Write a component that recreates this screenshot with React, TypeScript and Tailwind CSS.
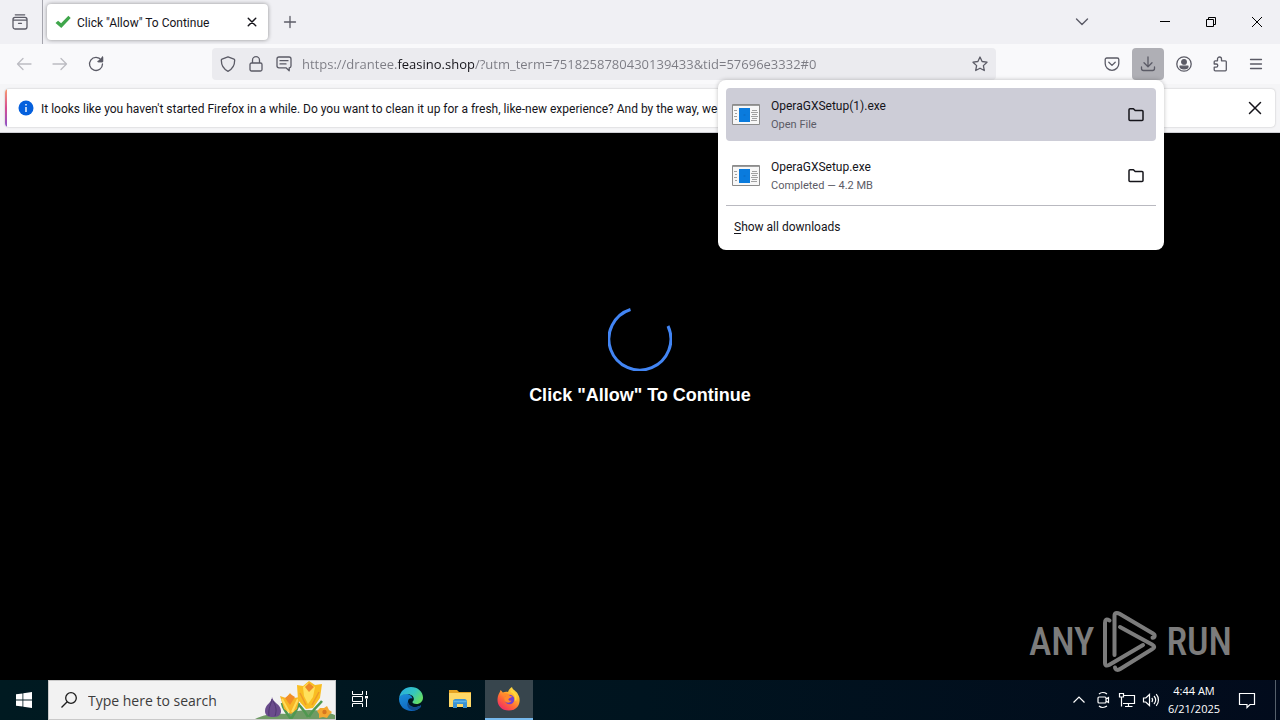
// App.tsx
import { useState } from 'react';
import type { ReactNode } from 'react';

interface Download {
  id: number;
  name: string;
  status: string;
}

const downloads: Download[] = [
  { id: 1, name: 'OperaGXSetup(1).exe', status: 'Open File' },
  { id: 2, name: 'OperaGXSetup.exe', status: 'Completed — 4.2 MB' },
];

const Icon = ({ children, size = 16, stroke = 1.3 }: { children: ReactNode; size?: number; stroke?: number }) => (
  <svg
    width={size}
    height={size}
    viewBox="0 0 16 16"
    fill="none"
    stroke="currentColor"
    strokeWidth={stroke}
    strokeLinecap="round"
    strokeLinejoin="round"
    className="shrink-0"
    aria-hidden="true"
  >
    {children}
  </svg>
);

const ToolButton = ({ label, children, className = '' }: { label: string; children: ReactNode; className?: string }) => (
  <button aria-label={label} className={`flex h-8 w-8 shrink-0 items-center justify-center rounded ${className}`}>
    {children}
  </button>
);

const WindowButton = ({ label, children }: { label: string; children: ReactNode }) => (
  <button aria-label={label} className="flex h-11 w-[46px] items-center justify-center text-black">
    <svg width="12" height="12" viewBox="0 0 12 12" fill="none" stroke="currentColor" aria-hidden="true">
      {children}
    </svg>
  </button>
);

const TabStrip = () => (
  <div className="flex h-11 shrink-0 items-center bg-[#f0f0f4] text-[#5b5b66]">
    <div className="flex h-full items-center border-r border-[#a5a5ad] pr-1.5 pl-1">
      <ToolButton label="Recent browsing">
        <Icon>
          <path d="M3.3.8h9.4M1 5.6C1 4.3 1.8 3.4 3 3.4h10c1.200 0 2 .9 2 2.200v7.200c0 1.300-.8 2.200-2 2.200H3c-1.200 0-2-.9-2-2.200zM1 6.200h14M6.500 9.300h3" />
        </Icon>
      </ToolButton>
    </div>
    <div className="ml-1 flex h-9 w-[221px] items-center rounded bg-white px-2 text-[#15141a] shadow-[0_0_4px_rgba(0,0,0,0.4)]">
      <svg width="16" height="16" viewBox="0 0 16 16" className="shrink-0" aria-hidden="true">
        <path d="M.5 9l2.600-2.300 3 2.500L13.400 1.800 15.700 4 6.300 13.900z" fill="#3fa64b" />
      </svg>
      <span className="ml-1.5 flex-1 truncate pt-0.5 font-['Roboto','Open_Sans',sans-serif] text-xs">Click "Allow" To Continue</span>
      <button aria-label="Close tab" className="flex h-4 w-4 items-center justify-center">
        <Icon size={12} stroke={1.9}>
          <path d="M3 3l10 10M13 3L3 13" />
        </Icon>
      </button>
    </div>
    <ToolButton label="New tab" className="ml-1.5">
      <Icon>
        <path d="M8 2.500v11M2.500 8h11" />
      </Icon>
    </ToolButton>
    <div className="flex-1" />
    <ToolButton label="List all tabs" className="mr-11">
      <Icon stroke={1.4}>
        <path d="M2.500 5L8 10.500 13.500 5" />
      </Icon>
    </ToolButton>
    <WindowButton label="Minimize">
      <path d="M1 5.500h10" />
    </WindowButton>
    <WindowButton label="Restore">
      <path d="M1.500 3.500h7v7h-7zM3.500 3.500v-2h7v7h-2" />
    </WindowButton>
    <WindowButton label="Close">
      <path d="M1 1l10 10M11 1L1 11" />
    </WindowButton>
  </div>
);

const FolderIcon = () => (
  <Icon stroke={1.5}>
    <path d="M1 2.700c0-.6.4-1 1-1h3.400l1.800 1.900H14c.6 0 1 .4 1 1v7.900c0 .6-.4 1-1 1H2c-.6 0-1-.4-1-1z" />
  </Icon>
);

const ProgramIcon = () => (
  <svg width="28" height="21" viewBox="0 0 28 21" className="shrink-0" aria-hidden="true">
    <path d="M.5.5h27v20H.5z" fill="#f7f7f7" stroke="#8b8b8b" />
    <path d="M1 1.500h26" stroke="#9b9b9b" />
    <path d="M2 6.500h3M3 9.500h2M2 12.500h3M3 15.500h2M20 6.500h5M19 8.500h7M20 10.500h5M19 12.500h7M20 14.500h5M19 16.500h6" stroke="#a0a0a0" />
    <path d="M7 4h11v14H7z" fill="#0a7bdd" />
    <circle cx="12.500" cy="11" r="1" fill="#0a70cc" />
  </svg>
);

const DownloadsPanel = () => {
  const [active] = useState(1);

  return (
    <div className="absolute top-full right-0 z-10 w-[446px] rounded-lg bg-white p-2 text-[#15141a] shadow-[0_0_4px_rgba(0,0,0,0.25)]">
      <ul className="flex flex-col gap-2">
        {downloads.map((item) => (
          <li
            key={item.id}
            className={`flex h-[53px] items-center rounded pr-1 pl-1.5 ${item.id === active ? 'bg-[#cdcdd7]' : ''}`}
          >
            <button className="flex flex-1 items-center text-left">
              <ProgramIcon />
              <span className="ml-[11px] flex flex-col font-['Roboto','Open_Sans',sans-serif]">
                <span className="text-xs leading-5">{item.name}</span>
                <span className="text-[11px] leading-[18px] text-[#5b5b66]">{item.status}</span>
              </span>
            </button>
            <ToolButton label={`Show ${item.name} in folder`}>
              <FolderIcon />
            </ToolButton>
          </li>
        ))}
      </ul>
      <hr className="mt-[3px] border-[#b9b9c0]" />
      <button className="mt-1 flex h-8 w-full items-center px-2 pt-0.5 font-['Roboto','Open_Sans',sans-serif] text-xs">
        <span>
          <u className="underline-offset-2">S</u>how all downloads
        </span>
      </button>
    </div>
  );
};

const NavBar = () => (
  <div className="flex h-10 shrink-0 items-center gap-1 bg-[#f9f9fb] px-2 text-[#5b5b66]">
    <ToolButton label="Back" className="text-[#bcbcc2]">
      <Icon>
        <path d="M15 8H1.500M7 2.500L1.500 8 7 13.500" />
      </Icon>
    </ToolButton>
    <ToolButton label="Forward" className="text-[#bcbcc2]">
      <Icon>
        <path d="M1 8h13.500M9 2.500L14.500 8 9 13.500" />
      </Icon>
    </ToolButton>
    <ToolButton label="Reload">
      <Icon>
        <path d="M13.300 4.200A6.500 6.500 0 1 0 14.500 8M14.500 1v4.500H10" />
        <path d="M14.500 1.500v4h-4z" fill="currentColor" />
      </Icon>
    </ToolButton>
    <div className="-mr-1 flex-1" />
    <div className="flex h-8 flex-8 items-center gap-2.5 rounded bg-[#ebebef] px-2">
      <div className="flex gap-3">
        <Icon>
          <path d="M8 .8l6 2.400c.4.2.7.5.7.9 0 4.600-1.800 8.900-6.700 11.200C3.100 13 1.300 8.700 1.300 4.100c0-.4.300-.7.700-.9z" />
        </Icon>
        <Icon>
          <path d="M3.500 7h9c.8 0 1.500.7 1.500 1.500v5c0 .8-.7 1.500-1.500 1.500h-9c-.8 0-1.500-.7-1.500-1.500v-5C2 7.700 2.700 7 3.500 7zM4.500 7V4.200a3.500 3.500 0 0 1 7 0V7" />
        </Icon>
        <Icon>
          <path d="M3 1h10c1 0 2 .9 2 2v7c0 1-.8 1.800-1.800 1.800v3L10 11.800H3c-1.100 0-2-.8-2-1.800V3c0-1.100.9-2 2-2zM4 4.700h8M4 7.900h6" />
        </Icon>
      </div>
      <input
        type="text"
        aria-label="Search or enter address"
        defaultValue="https://drantee.feasino.shop/?utm_term=7518258780430139433&tid=57696e3332#0"
        className="min-w-0 flex-1 bg-[linear-gradient(90deg,#7b7b83_95px,#15141a_95px,#15141a_172px,#7b7b83_172px)] bg-clip-text pt-0.5 text-[13px] text-transparent caret-black outline-none"
      />
      <button aria-label="Bookmark this page">
        <Icon>
          <path d="M8 1l2.100 4.500 4.900.7-3.600 3.400.9 4.900L8 12.200l-4.300 2.300.9-4.900L1 6.200l4.900-.7z" />
        </Icon>
      </button>
    </div>
    <div className="-ml-1 flex-1" />
    <ToolButton label="Save to Pocket">
      <Icon>
        <path d="M2.800 2h10.400c.9 0 1.600.7 1.600 1.600V7.500a6.800 6.800 0 0 1-13.600 0V3.600C1.200 2.700 1.900 2 2.800 2zM4.800 6.300L8 9.400l3.200-3.100" />
      </Icon>
    </ToolButton>
    <div className="relative">
      <ToolButton label="Downloads" className="bg-[#afafb5]">
        <Icon>
          <path d="M8 1v9.500M4 6.800l4 3.900 4-3.900M1.500 11v1.500c0 1.100.9 2 2 2h9c1.100 0 2-.9 2-2V11" />
        </Icon>
      </ToolButton>
      <DownloadsPanel />
    </div>
    <ToolButton label="Account">
      <Icon>
        <circle cx="8" cy="8" r="7.200" />
        <circle cx="8" cy="5.900" r="2.300" fill="currentColor" />
        <path d="M4 10.200h8c0 1.700-1.800 2.600-4 2.600s-4-.9-4-2.600z" fill="currentColor" />
      </Icon>
    </ToolButton>
    <ToolButton label="Extensions">
      <Icon>
        <path d="M5.500 4.800V3a2 2 0 0 1 4 0v1.800h3.800c.6 0 1 .4 1 1v8c0 .6-.4 1-1 1H3.200c-.6 0-1-.4-1-1v-2.600h2a1.600 1.600 0 0 0 0-3.200h-2V5.800c0-.6.4-1 1-1z" />
      </Icon>
    </ToolButton>
    <ToolButton label="Open application menu">
      <Icon>
        <path d="M2.500 3.500h11M2.500 8h11M2.500 12.500h11" />
      </Icon>
    </ToolButton>
  </div>
);

const NotificationBar = () => (
  <div className="shrink-0 border-b border-[#cfcfd4] bg-[#f5f5f7] px-[5px] py-[5px]">
    <div className="flex h-[38px] items-center overflow-hidden rounded bg-white pr-3 shadow-[0_0_2px_rgba(0,0,0,0.25)]">
      <div className="h-full w-0.5 bg-linear-to-b from-[#f79a6b] via-[#d64a92] to-[#8a4fc7]" />
      <svg width="16" height="16" viewBox="0 0 16 16" className="ml-[11px] shrink-0" aria-hidden="true">
        <circle cx="8" cy="8" r="7.500" fill="#0560dd" />
        <path d="M8 7v5M8 4v1.400" stroke="#fff" strokeWidth="1.400" />
      </svg>
      <p className="ml-[7px] flex-1 truncate pt-0.5 font-['Roboto','Open_Sans',sans-serif] text-xs text-[#15141a]">
        It looks like you haven't started Firefox in a while. Do you want to clean it up for a fresh, like-new experience?
        And by the way, we
      </p>
      <button aria-label="Close notification" className="flex h-4 w-4 items-center justify-center text-[#15141a]">
        <Icon stroke={1.5}>
          <path d="M2.500 2.500l11 11M13.500 2.500l-11 11" />
        </Icon>
      </button>
    </div>
  </div>
);

const Watermark = () => (
  <div className="absolute right-12 bottom-1.5 flex items-center gap-2 font-['Liberation_Sans_Narrow','Roboto_Condensed',sans-serif] text-[38px] leading-none font-medium text-[#7c7c7c]">
    <span>ANY</span>
    <svg width="56" height="64" viewBox="0 0 56 64" fill="none" stroke="currentColor" strokeWidth="4" strokeLinejoin="round" strokeLinecap="round" aria-hidden="true">
      <path d="M7.500 10.500C4 8.500 3 10 3 13v40c0 3 2 3 4 2l34-20" />
      <path d="M12.500 45V6c0-3 2-4 5-2.200L51 23.500c2.500 1.500 2 4-.5 4.200" />
      <path d="M18 17l32 17.500c3 1.800 3 3 0 4.800L19 58.500c-3 2-5 2-6-1" />
    </svg>
    <span>RUN</span>
  </div>
);

const FlowerArt = () => (
  <svg width="80" height="38" viewBox="0 0 80 38" className="shrink-0" aria-hidden="true">
    <path d="M0 38c9-5 20-6 32-5 14-6 34-5 48 1v4z" fill="#6f9b65" />
    <path d="M36 38C32 33 28 28 27 22M36 38c4-6 7-11 8-16M53 36c-4-8-9-11-11-15M54 36c4-8 9-11 13-16" stroke="#4f9850" strokeWidth="2.500" fill="none" />
    <path d="M17 16c0 6-7 7-7 14 0 5 4 6 8 6s8-1 8-6c0-7-8-8-9-14z" fill="#6a4c8c" />
    <path d="M17 18c-1 6-4 9-3 17M18 20c3 5 4 9 2 15" stroke="#4e3870" fill="none" />
    <path d="M25 15l6 2 4-5 4 5 6-1-3 12-6 5-7-5z" fill="#f7b525" />
    <path d="M30 17l5 7 5-8-5-3z" fill="#f28c28" />
    <path d="M27 18l7 13M43 18L37 31" stroke="#ffdc59" strokeWidth="2" fill="none" />
    <path d="M42 4l6 1 6-5 6 4 7-1-2 14-7 10-7 1-8-9z" fill="#f9bd22" />
    <path d="M48 6l5-4 7 4-2 10-5 7-4-8z" fill="#ffe15c" />
    <path d="M50 6l4-4 5 4-5 5z" fill="#ee8929" />
    <path d="M45 12l6 12M64 11l-7 13" stroke="#ee9a29" strokeWidth="1.500" />
    <path d="M65 27l4 0 3-2 2 4 3 2-3 3-2 3-4-1-4 1v-4l-2-3z" fill="#f4a731" />
    <circle cx="69.500" cy="31" r="2.200" fill="#d67620" />
  </svg>
);

const EdgeIcon = () => (
  <svg width="24" height="24" viewBox="0 0 24 24" aria-hidden="true">
    <defs>
      <linearGradient id="edge-wave" x1="0" y1="0" x2="1" y2="0.6">
        <stop offset="0" stopColor="#26a9e8" />
        <stop offset="0.6" stopColor="#35c6bd" />
        <stop offset="1" stopColor="#65de65" />
      </linearGradient>
      <linearGradient id="edge-base" x1="0" y1="0" x2="0.5" y2="1">
        <stop offset="0" stopColor="#1b8fdb" />
        <stop offset="1" stopColor="#0f66bd" />
      </linearGradient>
    </defs>
    <path d="M0 12C0 8.500 3.500 7 7 7c3.500 0 6 2 6.500 4.500-2-1-4.500 0-4.500 3 0 3.500 4 6 8 5.500 2-.2 3.500-1 4.500-1.500.6 0 .8.500.4 1.200C19.700 22.500 16.300 24 12.500 24 5.500 24 0 19 0 12z" fill="url(#edge-base)" />
    <path d="M9 14.500c0 3.500 4 6 8 5.500 2-.2 3.500-1 4.500-1.500.6 0 .8.500.4 1.200-1.500 2-4.400 3.500-7.400 3.500-5 0-7.500-5-5.500-8.700z" fill="#114a8b" />
    <path d="M.2 10.500C1.500 3.500 6.500 0 12 0c7 0 12 5 12 10.500 0 4-3 6.500-6.500 6.500-3 0-4.500-1.300-4-2.300 1-1 1.500-2 1.300-3.200C14.500 8.500 11 7 8 7 4.500 7 1.500 8.500.2 10.500z" fill="url(#edge-wave)" />
  </svg>
);

const ExplorerIcon = () => (
  <svg width="22" height="20" viewBox="0 0 22 20" aria-hidden="true">
    <path d="M0 1h8l2 2h12v6H0z" fill="#e6a323" />
    <path d="M0 4h22v14H0z" fill="#ffd867" />
    <path d="M4 19v-6.500C4 11 5 10 6.500 10h9c1.500 0 2.500 1 2.500 2.500V19h-4v-4H8v4z" fill="#3b92d2" />
    <path d="M4.500 12.500h13" stroke="#5eb4eb" strokeWidth="1.500" />
  </svg>
);

const FirefoxIcon = () => (
  <svg width="24" height="24" viewBox="0 0 24 24" aria-hidden="true">
    <defs>
      <linearGradient id="fox-flame" x1="0.9" y1="0" x2="0.2" y2="1">
        <stop offset="0" stopColor="#fff150" />
        <stop offset="0.35" stopColor="#ffb32c" />
        <stop offset="0.65" stopColor="#ff6a35" />
        <stop offset="1" stopColor="#f0246e" />
      </linearGradient>
    </defs>
    <path d="M2 6.500c.8-1 1.300-2.300 1.500-3.500 1 .6 1.800 1.600 2.300 2.600C8 4.500 9.500 4.500 11 5c.5-2 2-4 4-5 .3 3 5 4 6 7.500 3.500 5 1.800 16-9.200 16C4.500 23.500.5 18.500.5 13c0-2.500.5-4.500 1.500-6.500z" fill="url(#fox-flame)" />
    <circle cx="12.500" cy="12.500" r="4.800" fill="#7141cf" />
    <path d="M4 8c2-2 5-2.500 7.500-1 .5 1.500 2 2.300 4 2.500-.5 1-2.500 1.200-3.500 2-1.500 1.500.5 3 2.500 2-1 2.800-5.500 3-7 0C6.500 11 8 9.500 9 9.200 7 8.300 5.500 8 4 8z" fill="#ff8a2b" />
    <path d="M14 4c3 1.500 5.500 5 4.500 9.500" stroke="#ffd83b" strokeWidth="1.800" fill="none" />
  </svg>
);

const TaskButton = ({ label, active = false, children }: { label: string; active?: boolean; children: ReactNode }) => (
  <button
    aria-label={label}
    className={`flex h-10 w-12 items-center justify-center border-b-2 ${active ? 'border-[#76b9ed] bg-[#37454d]' : 'border-transparent'}`}
  >
    {children}
  </button>
);

const TrayButton = ({ label, children }: { label: string; children: ReactNode }) => (
  <button aria-label={label} className="flex h-10 w-6 items-center justify-center">
    <svg width="18" height="18" viewBox="0 0 18 18" fill="none" stroke="currentColor" strokeWidth="1.200" aria-hidden="true">
      {children}
    </svg>
  </button>
);

const Taskbar = () => (
  <footer className="flex h-10 shrink-0 items-center bg-linear-to-r from-[#001a21] via-[#00141f] to-[#020b1c] text-white">
    <button aria-label="Start" className="flex h-10 w-12 items-center justify-center">
      <svg width="16" height="16" viewBox="0 0 16 16" fill="#fff" aria-hidden="true">
        <path d="M0 2.300l6.500-.9v6.200H0zM7.300 1.300L16 0v7.600H7.300zM0 8.400h6.500v6.200L0 13.700zM7.300 8.400H16V16l-8.700-1.300z" />
      </svg>
    </button>
    <label className="flex h-10 w-72 items-center border border-[#c9c9c9] bg-[#f2f2f2] pl-3 text-[#1d1d1d]">
      <svg width="16" height="16" viewBox="0 0 16 16" fill="none" stroke="currentColor" strokeWidth="1.300" aria-hidden="true">
        <circle cx="10" cy="6" r="5.300" />
        <path d="M6.200 9.800L.5 15.500" />
      </svg>
      <input
        type="text"
        aria-label="Search"
        placeholder="Type here to search"
        className="ml-[11px] min-w-0 flex-1 bg-transparent pt-0.5 text-sm outline-none placeholder:text-[#3c3c3c]"
      />
      <FlowerArt />
    </label>
    <TaskButton label="Task View">
      <svg width="16" height="16" viewBox="0 0 16 16" fill="none" stroke="#fff" aria-hidden="true">
        <path d="M.5 0v3.500h10V0M.5 16v-3.500h10V16M.5 5.500h10v5H.5zM14.500 0v4M14.500 8v8" />
        <path d="M13 5h3v2.500h-3z" fill="#fff" stroke="none" />
      </svg>
    </TaskButton>
    <div className="ml-[3px] flex gap-px">
      <TaskButton label="Microsoft Edge">
        <EdgeIcon />
      </TaskButton>
      <TaskButton label="File Explorer">
        <ExplorerIcon />
      </TaskButton>
      <TaskButton label="Firefox" active>
        <FirefoxIcon />
      </TaskButton>
    </div>
    <div className="flex-1" />
    <TrayButton label="Show hidden icons">
      <path d="M3.500 11.500L9 6l5.500 5.500" />
    </TrayButton>
    <TrayButton label="Meet Now">
      <path d="M5 6h6c.6 0 1 .4 1 1v4c0 .6-.4 1-1 1H5c-.6 0-1-.4-1-1V7c0-.6.4-1 1-1zM12 8l2.500-1.500v5L12 10M5 3c2-1.800 5.500-1.800 8 0M5 15c2 1.800 5.500 1.800 8 0" />
    </TrayButton>
    <TrayButton label="Network">
      <path d="M5.500 4.500h11v8H5M1.500 2.500h4v3.500h-4zM3.500 6v9.500M10.500 12.500v3M7 15.500h7.500" />
    </TrayButton>
    <TrayButton label="Volume">
      <path d="M1.500 7h2.300L7.500 3.500v11L3.800 11H1.500zM9.800 7c1 1.200 1 2.800 0 4M12 5c2 2.400 2 5.600 0 8M14.200 3.200c3 3.400 3 8.200 0 11.600" />
    </TrayButton>
    <div className="w-[62px] text-center text-[11px] leading-[18px]">
      <p>4:44 AM</p>
      <p>6/21/2025</p>
    </div>
    <button aria-label="Notifications" className="flex h-10 w-11 items-center justify-center">
      <svg width="18" height="18" viewBox="0 0 18 18" fill="none" stroke="#fff" strokeWidth="1.200" aria-hidden="true">
        <path d="M1.500 2.500h15v11h-4.500l-3 3v-3h-7.500z" />
      </svg>
    </button>
    <button aria-label="Show desktop" className="ml-1.5 h-10 w-[5px] border-l border-[#56606b]" />
  </footer>
);

function App() {
  return (
    <div className="flex min-h-screen flex-col bg-black font-['Open_Sans','Noto_Sans',sans-serif]">
      {/* Browser chrome */}
      <header>
        <TabStrip />
        <NavBar />
        <NotificationBar />
      </header>

      {/* Page */}
      <main className="relative flex flex-1 flex-col items-center gap-2.5 pt-[174px]">
        <svg width="64" height="64" viewBox="0 0 64 64" fill="none" aria-hidden="true">
          <path d="M60 19A31 31 0 1 1 22.500 2.500" stroke="#4285f4" strokeWidth="3" />
        </svg>
        <h1 className="font-['Liberation_Sans',Arial,sans-serif] text-lg font-bold text-white">Click "Allow" To Continue</h1>
        <Watermark />
      </main>

      <Taskbar />
    </div>
  );
}

export default App;
